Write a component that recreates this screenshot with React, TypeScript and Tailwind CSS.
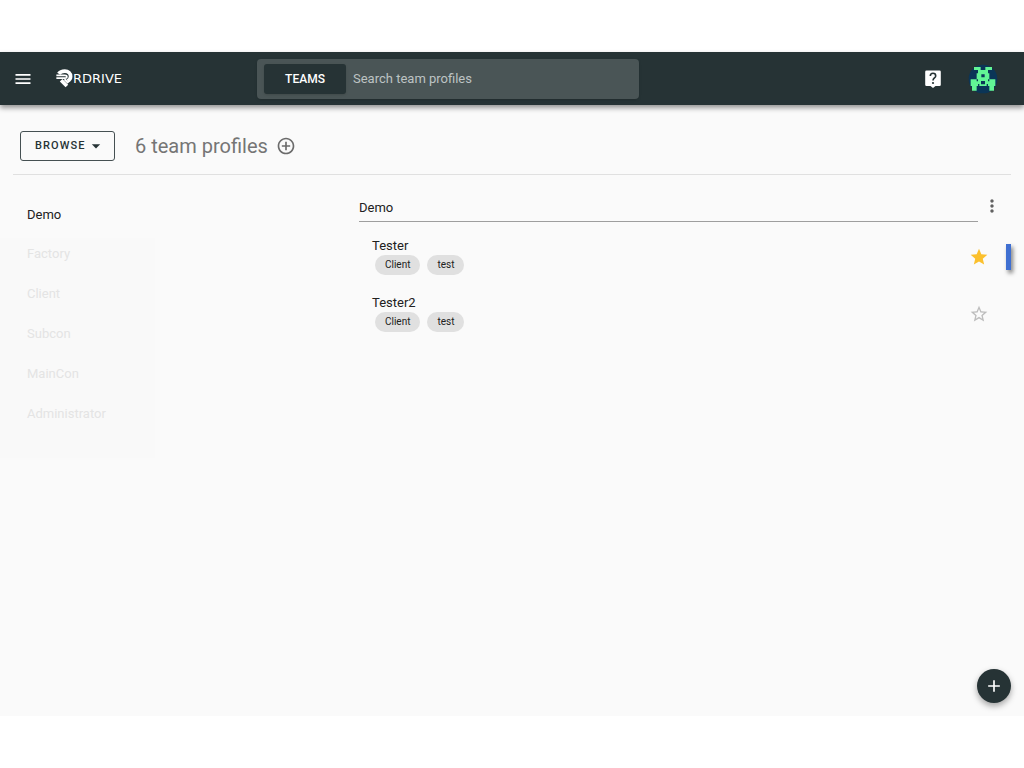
import { useState } from "react";

const GROUPS = ["Factory", "Client", "Subcon", "MainCon", "Administrator"];

const PROFILES = [
  { name: "Tester", tags: ["Client", "test"], starred: true },
  { name: "Tester2", tags: ["Client", "test"], starred: false },
];

const STAR = "M12 17.27 18.18 21l-1.64-7.03L22 9.24l-7.19-.61L12 2 9.19 8.63 2 9.24l5.46 4.73L5.82 21z";
const STAR_OUTLINE =
  "m22 9.24-7.19-.62L12 2 9.19 8.63 2 9.24l5.46 4.73L5.82 21 12 17.27 18.18 21l-1.63-7.03L22 9.24zM12 15.4l-3.76 2.27 1-4.28-3.32-2.88 4.38-.38L12 6.1l1.71 4.04 4.38.38-3.32 2.88 1 4.28L12 15.4z";

function Icon({ d, className }: { d: string; className: string }) {
  return (
    <svg viewBox="0 0 24 24" fill="currentColor" className={className} aria-hidden="true">
      <path d={d} />
    </svg>
  );
}

function Logo() {
  return (
    <a href="#" className="ml-[23px] flex items-center text-white">
      <svg viewBox="0 0 48 56" className="h-[19px] w-[17px]" fill="none" stroke="#fff" aria-hidden="true">
        <path d="M7 14C11 8 18 6 25 6c10 0 17 7 17 16 0 7-4 11-9 14" strokeWidth="11" />
        <path d="M0 19h25c4 0 6 1 6 4s-2 4-6 4H0" strokeWidth="5" />
        <path d="M14 33l17 17" strokeWidth="11" />
        <path d="M24 30l11 11" strokeWidth="6" />
      </svg>
      <span className="font-['DejaVu_Sans',sans-serif] text-[13px] leading-4">RDRIVE</span>
    </a>
  );
}

function Avatar() {
  return (
    <svg viewBox="0 0 90 90" className="size-[30px]" aria-hidden="true">
      <circle cx="45" cy="45" r="43" fill="#0b3557" />
      <path
        fill="#62f595"
        fillRule="evenodd"
        d="M18 9h20v9h14V9h20v9H60v10h4v18h18v20h-4v14H64V66H26v14H12V66H8V46h18V28h4V18H18zM40 31v9h10v-9zM26 46v6h4v-6zM60 46v6h4v-6zM39 51v10h12V51zM30 60v6h4v-6zM56 60v6h4v-6z"
      />
    </svg>
  );
}

export default function App() {
  const [profiles, setProfiles] = useState(PROFILES);

  function toggleStar(name: string) {
    setProfiles((list) => list.map((p) => (p.name === name ? { ...p, starred: !p.starred } : p)));
  }

  return (
    <div className="flex min-h-screen flex-col bg-white py-[52px] font-[Roboto,sans-serif] text-[13px] text-[#212121]">
      <header className="relative z-10 grid h-[53px] grid-cols-[257px_382px_1fr] items-center bg-[#263335] shadow-[0_3px_5px_rgba(0,0,0,0.4)]">
        <div className="flex items-center pl-[13px]">
          <button aria-label="Menu" className="text-white">
            <Icon d="M3 18h18v-2H3v2zm0-5h18v-2H3v2zm0-7v2h18V6H3z" className="size-5" />
          </button>
          <Logo />
        </div>
        <div className="flex h-10 items-center rounded-sm bg-[#4a5556] pl-[7px] shadow-sm">
          <button className="h-[30px] w-[82px] rounded-[3px] bg-[#263335] text-[12px] font-medium text-white shadow-sm">
            TEAMS
          </button>
          <input
            aria-label="Search team profiles"
            placeholder="Search team profiles"
            className="min-w-0 flex-1 bg-transparent px-[7px] text-white outline-none placeholder:text-[#bdc3c3]"
          />
        </div>
        <div className="flex items-center justify-end gap-[25px] pr-[26px]">
          <button aria-label="Help" className="text-white">
            <svg viewBox="0 0 20 20" className="size-5" aria-hidden="true">
              <path d="M3.500 1.500h13A1.300 1.300 0 0 1 17.800 2.800v13a1.300 1.300 0 0 1-1.300 1.300H12.500L10 19l-2.500-1.900H3.500a1.300 1.300 0 0 1-1.300-1.300v-13A1.300 1.300 0 0 1 3.500 1.500z" fill="#fff" />
              <path d="M7.300 7.100C7.300 5.400 8.500 4.300 10 4.300s2.700 1 2.700 2.600c0 1.900-2.700 2.200-2.700 4.500" fill="none" stroke="#263335" strokeWidth="1.600" />
              <circle cx="10" cy="14" r="1.100" fill="#263335" />
            </svg>
          </button>
          <button aria-label="Account">
            <Avatar />
          </button>
        </div>
      </header>

      <main className="relative flex-1 bg-[#fafafa]">
        <div className="mx-[13px] flex h-[70px] items-center border-b border-[#e0e0e0] pt-3 pl-[7px]">
          <button className="flex h-[30px] w-[95px] items-center rounded-[3px] border border-[#455052] pl-[14px] text-[11px] leading-5 font-medium tracking-widest text-[#263335]">
            <span className="pt-px">BROWSE</span>
            <Icon d="m7 10 5 5 5-5z" className="size-5" />
          </button>
          <h1 className="ml-5 text-[20px] text-[#757575]">6 team profiles</h1>
          <button aria-label="Add team profile" className="ml-2 text-[#6b6b6b]">
            <Icon
              d="M13 7h-2v4H7v2h4v4h2v-4h4v-2h-4V7zm-1-5C6.480 2 2 6.480 2 12s4.480 10 10 10 10-4.480 10-10S17.520 2 12 2zm0 18c-4.410 0-8-3.590-8-8s3.590-8 8-8 8 3.590 8 8-3.590 8-8 8z"
              className="size-5"
            />
          </button>
        </div>

        <div className="grid grid-cols-[359px_1fr] pt-5">
          <nav>
            <a href="#" className="flex h-10 w-[155px] items-center pl-[27px]">
              Demo
            </a>
            <div className="mt-[3px] w-[155px] bg-[#f9f9f9] pb-5 text-[#e4e4e4]">
              {GROUPS.map((group) => (
                <a key={group} href="#" className="flex h-10 items-center pb-2 pl-[27px]">
                  {group}
                </a>
              ))}
            </div>
          </nav>

          <section>
            <div className="flex items-start pr-[22px]">
              <h2 className="h-[27px] flex-1 border-b border-[#9e9e9e] pt-[3px] leading-5">Demo</h2>
              <button aria-label="More options" className="ml-1 pt-px text-[#616161]">
                <Icon
                  d="M12 8c1.100 0 2-.9 2-2s-.9-2-2-2-2 .9-2 2 .9 2 2 2zm0 2c-1.100 0-2 .9-2 2s.9 2 2 2 2-.9 2-2-.9-2-2-2zm0 6c-1.100 0-2 .9-2 2s.9 2 2 2 2-.9 2-2-.9-2-2-2z"
                  className="size-5"
                />
              </button>
            </div>
            <ul className="pt-[6px] pr-[13px]">
              {profiles.map((profile) => (
                <li key={profile.name} className="flex h-[57px] items-center pl-[13px]">
                  <div className="flex-1">
                    <h3 className="leading-[18px]">{profile.name}</h3>
                    <div className="flex gap-[7px] pb-[2px] pl-[3px]">
                      {profile.tags.map((tag) => (
                        <span key={tag} className="flex h-5 items-center rounded-full bg-[#e0e0e0] px-[10px] text-[10px]">
                          {tag}
                        </span>
                      ))}
                    </div>
                  </div>
                  <button
                    aria-label={`Star ${profile.name}`}
                    aria-pressed={profile.starred}
                    onClick={() => toggleStar(profile.name)}
                    className="mr-[17px]"
                  >
                    {profile.starred ? (
                      <Icon d={STAR} className="size-5 text-[#fbc02d]" />
                    ) : (
                      <Icon d={STAR_OUTLINE} className="size-5 text-[#bdbdbd]" />
                    )}
                  </button>
                  {profile.starred ? (
                    <div className="h-[26px] w-[5px] bg-[#3f6fd1] shadow-[2px_3px_4px_rgba(0,0,0,0.5)]" />
                  ) : (
                    <div className="w-[5px]" />
                  )}
                </li>
              ))}
            </ul>
          </section>
        </div>

        <button
          aria-label="Add"
          className="absolute right-[13px] bottom-[13px] flex size-[34px] items-center justify-center rounded-full bg-[#263335] text-white shadow-[0_3px_6px_rgba(0,0,0,0.35)]"
        >
          <Icon d="M19 13h-6v6h-2v-6H5v-2h6V5h2v6h6v2z" className="size-5" />
        </button>
      </main>
    </div>
  );
}
